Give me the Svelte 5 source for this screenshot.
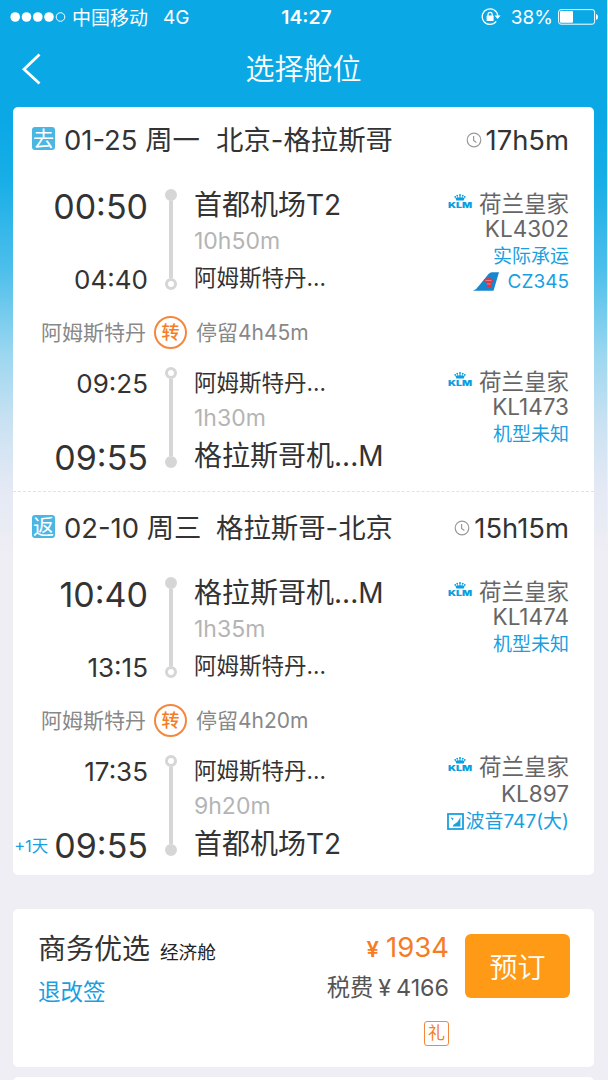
<script>
  // --- Voli ---
  const trips = [
    {
      tag: '去',
      date: '01-25 周一',
      route: '北京-格拉斯哥',
      total: '17h5m',
      stop: { city: '阿姆斯特丹', wait: '停留4h45m' },
      legs: [
        {
          from: { time: '00:50', place: '首都机场T2', big: true },
          to: { time: '04:40', place: '阿姆斯特丹...' },
          duration: '10h50m',
          flight: 'KL4302',
          note: '实际承运',
          operator: 'CZ345',
        },
        {
          from: { time: '09:25', place: '阿姆斯特丹...' },
          to: { time: '09:55', place: '格拉斯哥机...M', big: true },
          duration: '1h30m',
          flight: 'KL1473',
          note: '机型未知',
        },
      ],
    },
    {
      tag: '返',
      date: '02-10 周三',
      route: '格拉斯哥-北京',
      total: '15h15m',
      stop: { city: '阿姆斯特丹', wait: '停留4h20m' },
      legs: [
        {
          from: { time: '10:40', place: '格拉斯哥机...M', big: true },
          to: { time: '13:15', place: '阿姆斯特丹...' },
          duration: '1h35m',
          flight: 'KL1474',
          note: '机型未知',
        },
        {
          from: { time: '17:35', place: '阿姆斯特丹...' },
          to: { time: '09:55', place: '首都机场T2', big: true, plus: '+1天' },
          duration: '9h20m',
          flight: 'KL897',
          note: '波音747(大)',
          plane: true,
        },
      ],
    },
  ];
</script>

{#snippet klm()}
  <span class="klm">
    <svg viewBox="0 0 12 7" width="12" height="7">
      <g fill="#0a9fe0">
        <circle cx="6" cy="1" r="1" />
        <circle cx="3.2" cy="1.6" r=".9" />
        <circle cx="8.8" cy="1.6" r=".9" />
        <circle cx="1.2" cy="2.8" r=".9" />
        <circle cx="10.8" cy="2.8" r=".9" />
        <path d="M1 3l2.200 1L3.300 2l1.700 2L6 1l1 3 1.700-2 .1 2L11 3 9.600 6.600H2.400z" />
      </g>
    </svg>
    <em>KLM</em>
  </span>
{/snippet}

{#snippet point(p)}
  <div class="time" class:big={p.big}>
    {#if p.plus}<span class="plus">{p.plus}</span>{/if}
    <span>{p.time}</span>
  </div>
{/snippet}

<div class="screen">
  <!-- Status bar -->
  <div class="status">
    <svg class="signal" viewBox="0 0 56 12" width="56" height="12">
      {#each [5.2, 16.5, 27.8, 39] as cx}
        <circle {cx} cy="6" r="4.8" fill="#fff" />
      {/each}
      <circle cx="50.5" cy="6" r="4.3" fill="none" stroke="#fff" stroke-width="1" />
    </svg>
    <span class="carrier">中国移动</span>
    <span class="net">4G</span>
    <span class="clock">14:27</span>
    <svg class="lock" viewBox="0 0 20 18" width="20" height="18">
      <path d="M15.2 13.4A7.8 7.8 0 1 1 16.8 8" fill="none" stroke="#fff" stroke-width="1.3" />
      <path d="M13.6 7.6h6l-3 3.4z" fill="#fff" />
      <rect x="5.6" y="7.6" width="7" height="5.4" rx=".6" fill="#fff" />
      <path d="M7 8V6.4a2.1 2.1 0 0 1 4.2 0V8" fill="none" stroke="#fff" stroke-width="1.2" />
    </svg>
    <span class="percent">38%</span>
    <svg class="battery" viewBox="0 0 40 16" width="40" height="16">
      <rect x=".6" y=".6" width="36" height="14.6" rx="2.4" fill="none" stroke="#fff" stroke-width="1" />
      <rect x="2" y="2" width="13" height="11.8" rx="1" fill="#fff" />
      <path d="M38 5q2 .6 2 3t-2 3z" fill="#fff" />
    </svg>
  </div>

  <!-- Titolo -->
  <header class="nav">
    <svg class="back" viewBox="0 0 20 32" width="20" height="32">
      <path d="M18.500 1.500L3 16.200l15.500 14.300" fill="none" stroke="#fff" stroke-width="2.8" />
    </svg>
    <h1>选择舱位</h1>
  </header>

  <main>
    <section class="card">
      {#each trips as trip}
        <article class="trip">
          <div class="trip-head">
            <span class="tag">{trip.tag}</span>
            <span class="date">{trip.date}</span>
            <span class="route">{trip.route}</span>
            <span class="total">
              <svg viewBox="0 0 16 16" width="16" height="16" fill="none" stroke="#999" stroke-width="1.2">
                <circle cx="8" cy="8" r="6.8" />
                <path d="M7.6 4v4.4l2.8 2" />
              </svg>
              {trip.total}
            </span>
          </div>

          {#each trip.legs as leg, i}
            {#if i > 0}
              <div class="stop">
                <span class="stop-city">{trip.stop.city}</span>
                <span class="stop-icon">转</span>
                <span class="stop-wait">{trip.stop.wait}</span>
              </div>
            {/if}
            <div class="leg">
              <div class="times">
                {@render point(leg.from)}
                {@render point(leg.to)}
              </div>
              <div class="track">
                <i class:solid={leg.from.big}></i>
                <b></b>
                <i class:solid={leg.to.big}></i>
              </div>
              <div class="places">
                <div class="place" class:big={leg.from.big}>{leg.from.place}</div>
                <div class="duration">{leg.duration}</div>
                <div class="place" class:big={leg.to.big}>{leg.to.place}</div>
              </div>
              <div class="airline" class:plane={leg.plane}>
                <div class="name">{@render klm()}荷兰皇家</div>
                <div class="flight">{leg.flight}</div>
                <div class="note">
                  {#if leg.plane}
                    <svg viewBox="0 0 17 17" width="17" height="17">
                      <rect x="1" y="1" width="15" height="15" fill="none" stroke="#1a9fdf" stroke-width="1.8" />
                      <path d="M13.4 3.4v10H5.6q.4-2 3-3.2 3.400-2 4.800-6.800z" fill="#1a9fdf" />
                      <path d="M3.600 4.200l3 1-1 2.200z" fill="#1a9fdf" />
                    </svg>
                  {/if}
                  <span>{leg.note}</span>
                </div>
                {#if leg.operator}
                  <div class="operator">
                    <svg viewBox="0 0 26 19" width="26" height="19">
                      <path d="M0 18.800q3.500-1.200 6.500-5.800L15.500 2Q17 .2 19 .2h7l-5.500 18.600z" fill="#1686cf" />
                      <path d="M11 7.500q4-3 9.500 0 .6 3-3 3.200l1 4.300h-4.800l.6-4.300Q11 10.600 11 7.500z" fill="#e8343f" />
                      <path d="M12.500 8.600h6M14 12h3.600" stroke="#f3a0a8" stroke-width=".7" />
                    </svg>
                    {leg.operator}
                  </div>
                {/if}
              </div>
            </div>
          {/each}
        </article>
      {/each}
    </section>

    <!-- Tariffa -->
    <section class="card fare">
      <div class="product">
        <div class="product-name">商务优选 <small>经济舱</small></div>
        <div class="rules">退改签</div>
      </div>
      <div class="prices">
        <div class="price"><span>¥</span>1934</div>
        <div class="tax">税费<span>¥</span>4166</div>
        <div class="gift">礼</div>
      </div>
      <button class="book">预订</button>
    </section>

    <section class="card next"></section>
  </main>
</div>

<style>
  :global(body) {
    overflow: hidden;
  }

  .screen {
    box-sizing: border-box;
    width: 608px;
    height: 1080px;
    overflow: hidden;
    border-right: 1px solid #e4f3fa;
    font-family: Inter, 'Noto Sans CJK SC', sans-serif;
    font-weight: 390;
    color: #333;
    white-space: nowrap;
    background: linear-gradient(#0ba8e6 0, #0ba8e6 120px, #18aee7 180px, #4dbfeb 270px, #9cd7f0 355px, #c8e1f2 420px, #e3e9f4 485px, #efeef5 560px);
  }

  /* ---- Status bar ---- */
  .status {
    position: relative;
    display: flex;
    align-items: center;
    height: 34px;
    padding: 0 9px 0 10px;
    color: #fff;
    font-size: 19px;
  }
  .carrier { margin: 0 0 2px 6px; }
  .net { margin-left: 15px; }
  .clock {
    position: absolute;
    left: 0;
    right: 0;
    padding-left: 6px;
    text-align: center;
    font-size: 19.300px;
    font-weight: 600;
  }
  .lock { margin-left: auto; }
  .percent { margin: 0 5px 0 10px; }

  /* ---- Nav ---- */
  .nav {
    display: flex;
    align-items: center;
    height: 73px;
    padding-left: 21px;
  }
  .nav h1 {
    flex: 1;
    margin: 0 41px 2px 0;
    text-align: center;
    color: #fff;
    font-size: 29px;
    font-weight: 350;
    line-height: 40px;
  }
  .back { margin-bottom: 4px; }

  /* ---- Card ---- */
  .card {
    margin: 0 13px;
    background: #fff;
    border-radius: 5px;
  }
  .trip { padding-bottom: 14px; }
  .trip + .trip { padding-top: 3px; }
  .trip:first-child {
    padding-bottom: 18px;
    border-bottom: 1px dashed #e2e2e2;
  }

  .trip-head {
    display: flex;
    align-items: center;
    height: 66px;
    padding: 0 25px 0 19px;
    font-size: 27.400px;
    line-height: 40px;
  }
  .tag {
    width: 23px;
    height: 23px;
    margin: 0 9px 3px 0;
    border-radius: 3px;
    background: #4cb6e3;
    color: #fff;
    font-size: 21px;
    line-height: 23px;
    text-align: center;
  }
  .date { width: 152px; }
  .total {
    display: flex;
    align-items: center;
    gap: 4px;
    margin-left: auto;
  }

  /* ---- Leg ---- */
  .leg {
    display: flex;
    height: 109px;
    padding-right: 25px;
  }
  .trip-head + .leg { margin-top: 13px; }
  .times {
    display: flex;
    flex-direction: column;
    justify-content: space-between;
    width: 135px;
    height: 113px;
  }
  .time {
    display: flex;
    align-items: center;
    justify-content: flex-end;
    font-size: 26px;
    line-height: 39px;
  }
  .time.big { font-size: 34px; line-height: 42px; }
  .time.big:last-child { line-height: 38px; }
  .plus {
    margin-right: 6px;
    color: #1a9fdf;
    font-size: 16.500px;
  }
  .track {
    display: flex;
    flex-direction: column;
    align-items: center;
    width: 46px;
    height: 101px;
    padding-top: 3px;
  }
  .track i {
    box-sizing: border-box;
    width: 12px;
    height: 12px;
    border: 3px solid #d6d6d6;
    border-radius: 50%;
  }
  .track i.solid { background: #d6d6d6; }
  .track b { flex: 1; width: 4px; background: #d6d6d6; }
  .places { flex: 1; }
  .place { height: 37px; font-size: 22.500px; line-height: 37px; }
  .place.big { height: 38px; font-size: 28px; line-height: 38px; }
  .place.big:last-child { padding-top: 1px; }
  .duration {
    height: 35px;
    color: #b4b4b4;
    font-size: 23px;
    line-height: 35px;
  }

  /* ---- Airline ---- */
  .airline {
    display: flex;
    flex-direction: column;
    align-items: flex-end;
    padding-top: 5px;
    color: #666;
    font-size: 22.500px;
    line-height: 25px;
  }
  .name, .note, .operator { display: flex; align-items: center; }
  .klm {
    display: flex;
    flex-direction: column;
    align-items: center;
    width: 24px;
    margin: 0 7px 4px 0;
  }
  .klm em {
    color: #0a9fe0;
    font-size: 8px;
    font-style: normal;
    font-weight: 900;
    line-height: 8px;
    transform: scaleX(1.32);
  }
  .note, .operator { color: #1a9fdf; font-size: 19px; }
  .note { height: 30px; }
  .operator { height: 20px; gap: 9px; }
  .plane { padding-top: 2px; }
  .plane .flight { padding-top: 2px; }
  .plane .note { gap: 1px; }

  /* ---- Stop ---- */
  .stop {
    box-sizing: border-box;
    display: flex;
    align-items: center;
    height: 69px;
    padding: 5px 0 0 28px;
    color: #888;
    font-size: 21px;
  }
  .stop-city, .stop-wait { margin-bottom: 2px; }
  .stop-icon {
    box-sizing: border-box;
    width: 33px;
    height: 33px;
    margin: 0 9px 0 8px;
    border: 2px solid #f5873c;
    border-radius: 50%;
    color: #f57c23;
    font-size: 18px;
    font-weight: 500;
    line-height: 29px;
    text-align: center;
  }

  /* ---- Fare ---- */
  .fare {
    box-sizing: border-box;
    display: flex;
    height: 158px;
    margin-top: 34px;
    padding: 0 24px 0 25px;
  }
  .product { flex: 1; padding-top: 20px; }
  .product-name { font-size: 28px; line-height: 40px; }
  .product-name small {
    margin-left: 2px;
    color: #222;
    font-size: 18.700px;
    font-weight: 400;
  }
  .rules {
    color: #1a9fdf;
    font-size: 22.500px;
    line-height: 38px;
  }
  .prices {
    display: flex;
    flex-direction: column;
    align-items: flex-end;
    padding-top: 18px;
  }
  .price { color: #f57c23; font-size: 27.500px; font-weight: 400; line-height: 40px; }
  .price span { margin-right: 7px; font-size: 22px; font-weight: 600; }
  .tax { color: #555; font-size: 23.300px; line-height: 37px; }
  .tax span { margin: 0 5px 0 5px; }
  .gift {
    width: 23px;
    height: 23px;
    margin-top: 15px;
    border: 1px solid #f5873c;
    border-radius: 3px;
    color: #f57c23;
    font-size: 17px;
    line-height: 23px;
    text-align: center;
  }
  .book {
    width: 105px;
    height: 64px;
    margin: 25px 0 0 16px;
    border: none;
    border-radius: 6px;
    background: #fe9a16;
    color: #fff;
    font-family: inherit;
    font-size: 28px;
    font-weight: 350;
  }
  .next { height: 40px; margin-top: 10px; }
</style>
